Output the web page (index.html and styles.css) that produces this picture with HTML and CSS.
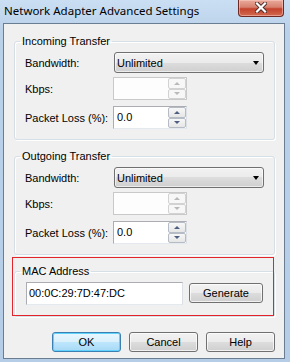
FILE: index.html
```html
<!DOCTYPE html>
<html lang="en">
<head>
    <meta charset="UTF-8">
    <title>Network Adapter Advanced Settings</title>
    <link rel="stylesheet" href="styles.css">
</head>
<body>
    <div class="window">
        <div class="titlebar">
            <span class="title">Network Adapter Advanced Settings</span>
            <button class="close" type="button" aria-label="Close">
                <svg width="12" height="11" viewBox="0 0 12 11">
                    <path d="M2 1.5 L10 9.5 M10 1.5 L2 9.5" stroke="#4a2a26" stroke-width="4" stroke-linecap="square"/>
                    <path d="M2 1.5 L10 9.5 M10 1.5 L2 9.5" stroke="#fff" stroke-width="2.2" stroke-linecap="square"/>
                </svg>
            </button>
        </div>

        <div class="client">
            <!-- Incoming -->
            <fieldset class="group">
                <legend>Incoming Transfer</legend>
                <div class="row row-combo">
                    <label>Bandwidth:</label>
                    <div class="combo"><span>Unlimited</span><span class="arrow"></span></div>
                </div>
                <div class="row row-spin">
                    <label>Kbps:</label>
                    <div class="spin disabled">
                        <span class="spin-value"></span>
                        <div class="spin-buttons"><span class="spin-btn up"></span><span class="spin-btn down"></span></div>
                    </div>
                </div>
                <div class="row row-spin row-last">
                    <label>Packet Loss (%):</label>
                    <div class="spin">
                        <span class="spin-value">0.0</span>
                        <div class="spin-buttons"><span class="spin-btn up"></span><span class="spin-btn down"></span></div>
                    </div>
                </div>
            </fieldset>

            <!-- Outgoing -->
            <fieldset class="group">
                <legend>Outgoing Transfer</legend>
                <div class="row row-combo">
                    <label>Bandwidth:</label>
                    <div class="combo"><span>Unlimited</span><span class="arrow"></span></div>
                </div>
                <div class="row row-spin">
                    <label>Kbps:</label>
                    <div class="spin disabled">
                        <span class="spin-value"></span>
                        <div class="spin-buttons"><span class="spin-btn up"></span><span class="spin-btn down"></span></div>
                    </div>
                </div>
                <div class="row row-spin row-last">
                    <label>Packet Loss (%):</label>
                    <div class="spin">
                        <span class="spin-value">0.0</span>
                        <div class="spin-buttons"><span class="spin-btn up"></span><span class="spin-btn down"></span></div>
                    </div>
                </div>
            </fieldset>

            <!-- MAC -->
            <fieldset class="group group-mac">
                <legend>MAC Address</legend>
                <div class="mac-row">
                    <div class="textbox">00:0C:29:7D:47:DC</div>
                    <button class="button generate" type="button">Generate</button>
                </div>
            </fieldset>

            <div class="actions">
                <button class="button default" type="button">OK</button>
                <button class="button" type="button">Cancel</button>
                <button class="button" type="button">Help</button>
            </div>
        </div>

        <div class="highlight"></div>
    </div>
</body>
</html>
```

FILE: styles.css
```css
* {
    box-sizing: border-box;
}

html, body {
    margin: 0;
    padding: 0;
}

body {
    width: 290px;
    height: 362px;
    overflow: hidden;
    font-family: "Liberation Sans", Arial, sans-serif;
    font-size: 11px;
    color: #000;
}

.window {
    position: relative;
    height: 362px;
    display: flex;
    flex-direction: column;
    padding: 0 5px 3px 3px;
    background: linear-gradient(#cbdff3, #bad1ea 30px, #b5cde7);
}

/* Title bar */
.titlebar {
    height: 23px;
    display: flex;
    justify-content: space-between;
    align-items: flex-start;
}

.title {
    font-family: "Noto Sans", sans-serif;
    font-size: 11.5px;
    line-height: 16px;
    padding: 3px 0 0 1px;
    color: #000;
}

.close {
    width: 46px;
    height: 17px;
    margin-right: 1px;
    padding: 0;
    border: 1px solid #6e2a22;
    border-top: none;
    border-radius: 0 0 4px 4px;
    background: linear-gradient(#e9a99c, #d8816f 45%, #c4422c 55%, #d26a50);
    box-shadow: inset 0 0 0 1px rgba(255, 210, 200, 0.5);
    display: flex;
    align-items: center;
    justify-content: center;
}

.close svg {
    display: block;
    margin-top: -1px;
}

/* Client area */
.client {
    flex: 1;
    background: #f0f0f0;
    border: 1px solid #6b7d90;
    padding: 10px 9px 6px 10px;
}

.group {
    margin: 0 0 9px;
    padding: 4px 10px 10px;
    border: 1px solid #d5dfe5;
    border-radius: 3px;
    box-shadow: inset 1px 1px #fff, 1px 1px #fff;
    min-width: 0;
}

.group legend {
    padding: 0 2px;
    margin-left: -5px;
    line-height: 14px;
}

.group-mac {
    padding-bottom: 11px;
    margin-bottom: 15px;
}

.row {
    display: flex;
    align-items: center;
}

.row label {
    width: 88px;
}

.row-combo {
    margin-bottom: 4px;
}

.row-spin {
    margin-bottom: 6px;
}

.row-last {
    margin-bottom: 0;
}

/* Combo box */
.combo {
    width: 150px;
    height: 21px;
    margin-left: 1px;
    padding: 0 4px 0 2px;
    border: 1px solid #707070;
    border-radius: 3px;
    background: linear-gradient(#f2f2f2, #ebebeb 50%, #dddddd 50%, #cfcfcf);
    box-shadow: inset 0 0 0 1px rgba(255, 255, 255, 0.6);
    display: flex;
    align-items: center;
    justify-content: space-between;
}

.arrow {
    width: 0;
    height: 0;
    border-left: 3.5px solid transparent;
    border-right: 3.5px solid transparent;
    border-top: 4px solid #000;
    margin-top: 1px;
}

/* Spin box */
.spin {
    width: 74px;
    height: 23px;
    padding-left: 3px;
    border: 1px solid #abadb3;
    border-right-color: #dbdfe6;
    border-bottom-color: #e3e9ef;
    background: #fff;
    display: flex;
    justify-content: space-between;
}

.spin-value {
    line-height: 20px;
}

.spin-buttons {
    width: 18px;
    display: flex;
    flex-direction: column;
}

.spin-btn {
    flex: 1;
    border: 1px solid #b6bcc6;
    border-radius: 2px;
    background: linear-gradient(#f7f7f7, #e6e6e6);
    display: flex;
    align-items: center;
    justify-content: center;
}

.spin-btn::after {
    content: "";
    width: 0;
    height: 0;
    border-left: 3px solid transparent;
    border-right: 3px solid transparent;
}

.spin-btn.up::after {
    border-bottom: 3px solid #4c5f82;
}

.spin-btn.down::after {
    border-top: 3px solid #4c5f82;
}

.spin.disabled {
    border-color: #c9c9c9;
    background: #fdfdfd;
}

.spin.disabled .spin-btn {
    border-color: #d2d2d2;
    background: #f7f7f7;
}

.spin.disabled .spin-btn.up::after {
    border-bottom-color: #b9b9b9;
}

.spin.disabled .spin-btn.down::after {
    border-top-color: #b9b9b9;
}

/* MAC row */
.mac-row {
    display: flex;
    align-items: flex-start;
}

.textbox {
    width: 157px;
    height: 23px;
    margin-left: 1px;
    padding-left: 2px;
    line-height: 20px;
    border: 1px solid #abadb3;
    border-right-color: #dbdfe6;
    border-bottom-color: #e3e9ef;
    background: #fff;
}

/* Buttons */
.button {
    width: 73px;
    height: 20px;
    padding: 0;
    font-family: inherit;
    font-size: 11px;
    color: #000;
    border: 1px solid #707070;
    border-radius: 3px;
    background: linear-gradient(#f2f2f2, #ebebeb 50%, #dddddd 50%, #cfcfcf);
    box-shadow: inset 0 0 0 1px rgba(255, 255, 255, 0.7);
}

.generate {
    width: 74px;
    margin: 1px 0 0 6px;
}

.button.default {
    border-color: #3c7fb1;
    background: linear-gradient(#eaf6fd, #d9f0fc 50%, #bee6fd 50%, #a7d9f5);
    box-shadow: inset 0 0 0 1px #5fd3fb;
}

.actions {
    display: flex;
    gap: 8px;
    padding-left: 38px;
}

/* Red annotation frame laid over the MAC group */
.highlight {
    position: absolute;
    left: 12px;
    top: 257px;
    width: 262px;
    height: 59px;
    border: 1px solid #e3242b;
    pointer-events: none;
}
```
